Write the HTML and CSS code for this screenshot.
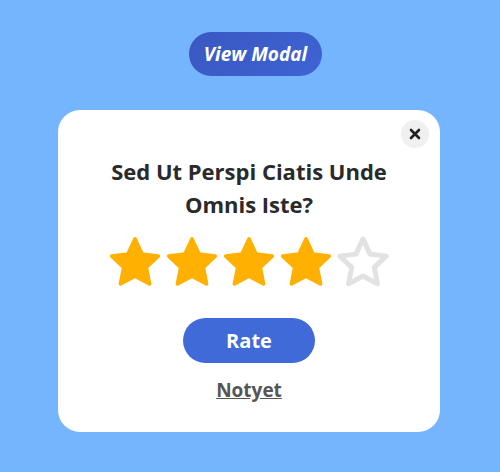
FILE: index.html
```html
<!DOCTYPE html>
<html>
<head>
<meta charset="utf-8">
<link rel="stylesheet" href="styles.css">
</head>
<body>
<div class="page">
  <button class="view-btn">View Modal</button>
  <div class="modal">
    <button class="close" aria-label="close">
      <svg width="12" height="12" viewBox="0 0 12 12"><path d="M2 2L10 10M10 2L2 10" stroke="#222" stroke-width="2.6" stroke-linecap="round"/></svg>
    </button>
    <h2 class="title">Sed Ut Perspi Ciatis Unde<br>Omnis Iste?</h2>
    <div class="stars">
      <svg class="star full" viewBox="0 0 24 24"><path d="M12 2.4l2.8 6.05 6.5.8-4.8 4.5 1.3 6.6L12 17.2l-5.8 3.15 1.3-6.6-4.8-4.5 6.5-.8z"/></svg>
      <svg class="star full" viewBox="0 0 24 24"><path d="M12 2.4l2.8 6.05 6.5.8-4.8 4.5 1.3 6.6L12 17.2l-5.8 3.15 1.3-6.6-4.8-4.5 6.5-.8z"/></svg>
      <svg class="star full" viewBox="0 0 24 24"><path d="M12 2.4l2.8 6.05 6.5.8-4.8 4.5 1.3 6.6L12 17.2l-5.8 3.15 1.3-6.6-4.8-4.5 6.5-.8z"/></svg>
      <svg class="star full" viewBox="0 0 24 24"><path d="M12 2.4l2.8 6.05 6.5.8-4.8 4.5 1.3 6.6L12 17.2l-5.8 3.15 1.3-6.6-4.8-4.5 6.5-.8z"/></svg>
      <svg class="star empty" viewBox="0 0 24 24"><path d="M12 2.4l2.8 6.05 6.5.8-4.8 4.5 1.3 6.6L12 17.2l-5.8 3.15 1.3-6.6-4.8-4.5 6.5-.8z"/></svg>
    </div>
    <button class="rate">Rate</button>
    <a class="notyet" href="#">Notyet</a>
  </div>
</div>
</body>
</html>
```
FILE: styles.css
```css
html, body {
  margin: 0;
  padding: 0;
}
body {
  background: #74b5fd;
  font-family: "Open Sans", "Liberation Sans", sans-serif;
  width: 500px;
  height: 472px;
  overflow: hidden;
}
.page {
  display: flex;
  flex-direction: column;
  align-items: center;
  padding-top: 32px;
}
.view-btn {
  width: 133px;
  height: 44px;
  margin-left: 11px;
  border: none;
  border-radius: 22px;
  background: linear-gradient(135deg, #3a58c0, #3e63d4);
  color: #fff;
  font-family: inherit;
  font-size: 19px;
  font-weight: 700;
  font-style: italic;
  padding: 0;
}
.modal {
  position: relative;
  margin-top: 34px;
  margin-left: -2px;
  width: 382px;
  height: 322px;
  box-sizing: border-box;
  background: #fff;
  border-radius: 22px;
  display: flex;
  flex-direction: column;
  align-items: center;
  padding-top: 45px;
}
.close {
  position: absolute;
  top: 10px;
  right: 11px;
  width: 28px;
  height: 28px;
  border-radius: 50%;
  border: none;
  background: #f0f0f0;
  display: flex;
  align-items: center;
  justify-content: center;
  padding: 0;
}
.title {
  margin: 0;
  font-size: 22px;
  font-weight: 700;
  line-height: 33px;
  color: #2a2a2a;
  text-align: center;
}
.stars {
  display: flex;
  margin-top: 12px;
}
.star {
  width: 60px;
  height: 60px;
  margin: 0 -1.5px;
}
.star path {
  stroke-linejoin: round;
}
.star.full path {
  fill: #ffb000;
  stroke: #ffb000;
  stroke-width: 1.5;
}
.star.empty path {
  fill: none;
  stroke: #e2e2e2;
  stroke-width: 2;
}
.rate {
  margin-top: 25px;
  width: 132px;
  height: 45px;
  border: none;
  border-radius: 23px;
  background: #3f6ad8;
  color: #fff;
  font-family: inherit;
  font-size: 20px;
  font-weight: 700;
  padding: 0;
}
.notyet {
  margin-top: 14px;
  font-size: 19px;
  font-weight: 700;
  color: #555;
  text-decoration: underline;
}
```
